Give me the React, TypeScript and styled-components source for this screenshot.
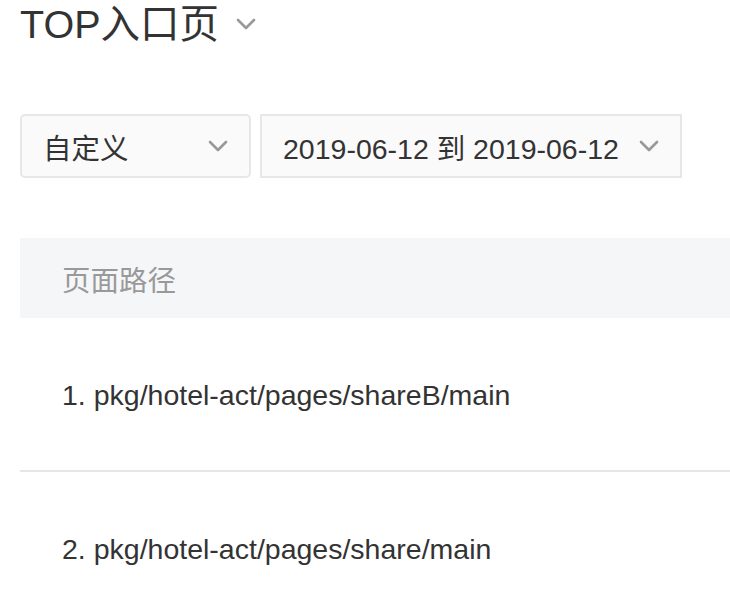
import styled, { createGlobalStyle } from "styled-components";

const GlobalStyle = createGlobalStyle`
	body {
		margin: 0;
		background: #fff;
		font-family: "Liberation Sans", Arial, "Noto Sans CJK SC", sans-serif;
		color: #333;
	}
`;

const Page = styled.div`
	padding-left: 20px;
	width: 710px;
`;

const TitleRow = styled.div`
	display: flex;
	align-items: center;
	gap: 17px;
	height: 48px;
`;

const Title = styled.h1`
	margin: 0;
	font-size: 39.5px;
	line-height: 48px;
	font-weight: normal;
	color: #333;
`;

const Filters = styled.div`
	display: flex;
	gap: 9px;
	margin-top: 66px;
`;

const Select = styled.div<{ width?: number; rounded?: boolean }>`
	display: flex;
	align-items: center;
	justify-content: space-between;
	gap: 20px;
	box-sizing: border-box;
	height: 64px;
	width: ${(props) => (props.width ? `${props.width}px` : "auto")};
	padding: 0 21px;
	border: 2px solid #e6e7e9;
	border-radius: ${(props) => (props.rounded ? "5px" : "0")};
	background: #fafafa;
	font-size: 28.5px;
	color: #333;
`;

const Table = styled.div`
	margin-top: 60px;
`;

const HeaderCell = styled.div`
	display: flex;
	align-items: center;
	height: 80px;
	padding-left: 42px;
	background: #f5f6f8;
	font-size: 28.5px;
	color: #999;
`;

const Row = styled.div`
	display: flex;
	align-items: center;
	box-sizing: border-box;
	height: 154px;
	padding: 3px 0 0 42px;
	border-bottom: 2px solid #e6e6e6;
	font-size: 28.5px;
	color: #333;
`;

const Chevron = ({ size = 20 }: { size?: number }) => (
	<svg width={size} height={size / 2 + 2} viewBox="0 0 20 12" fill="none">
		<path
			d="M2 2 L10 10 L18 2"
			stroke="#999"
			strokeWidth="2.6"
			strokeLinecap="round"
			strokeLinejoin="round"
		/>
	</svg>
);

const paths = [
	"pkg/hotel-act/pages/shareB/main",
	"pkg/hotel-act/pages/share/main",
];

function App() {
	return (
		<>
			<GlobalStyle />
			<Page>
				<TitleRow>
					<Title>TOP入口页</Title>
					<Chevron />
				</TitleRow>
				<Filters>
					<Select width={231} rounded>
						<span>自定义</span>
						<Chevron />
					</Select>
					<Select>
						<span>2019-06-12 到 2019-06-12</span>
						<Chevron />
					</Select>
				</Filters>
				<Table>
					<HeaderCell>页面路径</HeaderCell>
					{paths.map((p, i) => (
						<Row key={p}>
							{i + 1}. {p}
						</Row>
					))}
				</Table>
			</Page>
		</>
	);
}

export default App;
